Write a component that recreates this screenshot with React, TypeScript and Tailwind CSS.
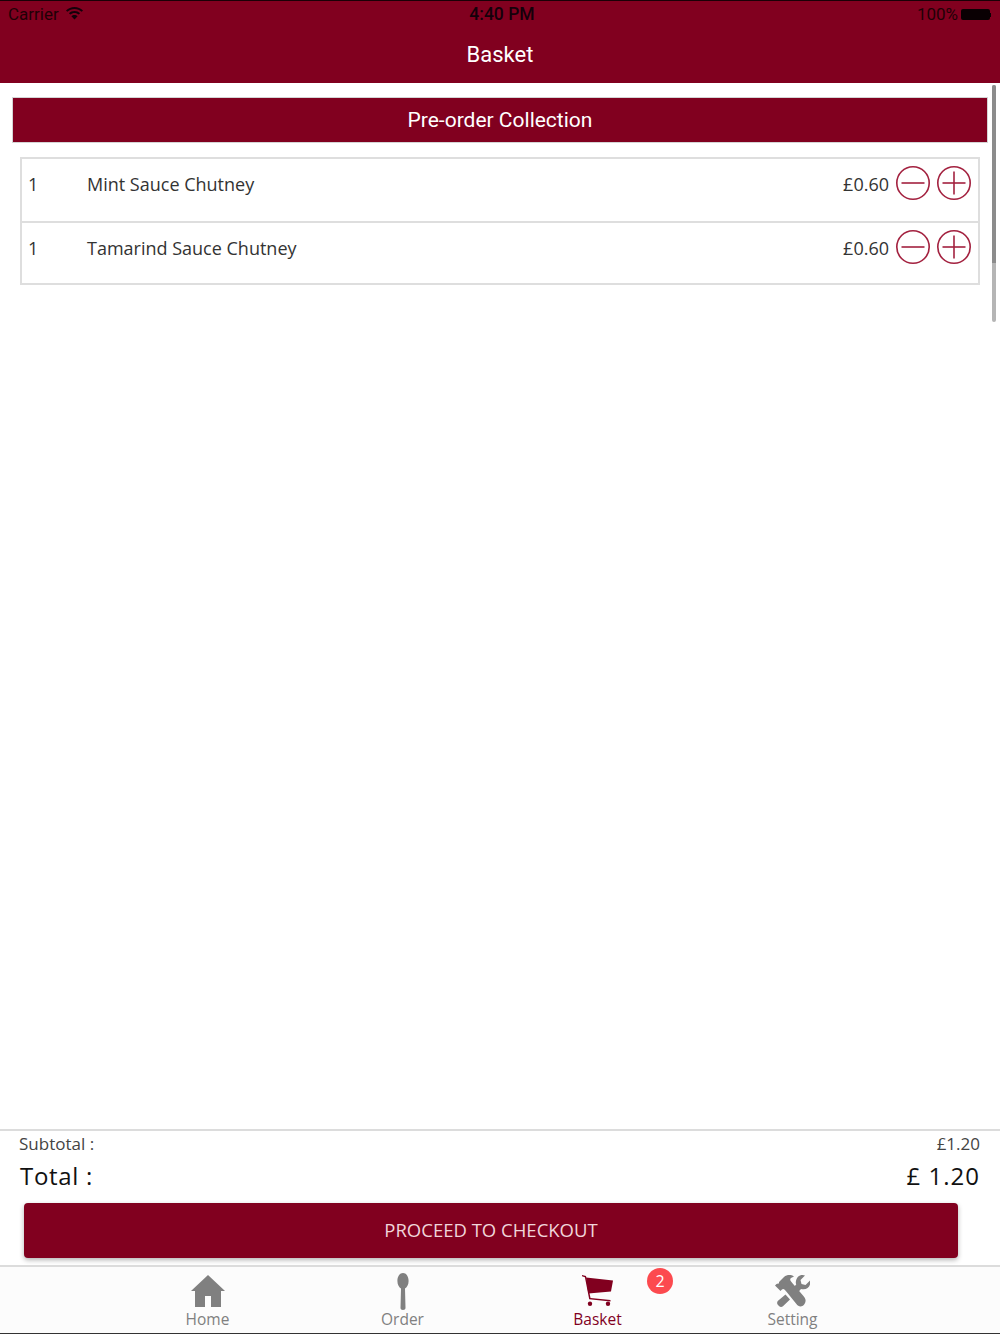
const MAROON = "bg-[#81001f]";

const basketItems = [
    { qty: 1, name: "Mint Sauce Chutney", price: "£0.60" },
    { qty: 1, name: "Tamarind Sauce Chutney", price: "£0.60" },
];

const RoundButton = (props: { plus?: boolean }) => {
    return (
        <svg width="36" height="36" viewBox="0 0 36 36" fill="none" stroke="#a3213f" strokeWidth="1.6">
            <circle cx="18" cy="18" r="16.2" />
            <path d="M6.500 18h23" />
            {props.plus && <path d="M18 6.500v23" />}
        </svg>
    );
};

const StatusBar = () => {
    return (
        <div className="flex h-[27px] items-center justify-between pl-2 pr-[9px] font-['Roboto',sans-serif] text-[17px] text-[#1f0006]">
            <div className="flex w-[200px] items-center gap-[7px]">
                <span>Carrier</span>
                <svg width="17" height="13" viewBox="0 0 17 13" fill="#14000a" className="mb-[3px]">
                    <path d="M8.500 0C5.200 0 2.300 1.300 0 3.400l1.300 1.400C3.200 3 5.700 1.900 8.500 1.900s5.300 1.100 7.200 2.900L17 3.400C14.700 1.300 11.800 0 8.500 0z" />
                    <path d="M8.500 4C6.300 4 4.400 4.800 2.900 6.200l1.400 1.400C5.400 6.600 6.900 6 8.500 6s3.100.6 4.200 1.600l1.400-1.400C12.600 4.800 10.700 4 8.500 4z" />
                    <path d="M8.500 8C7.300 8 6.200 8.500 5.400 9.200L8.500 12.500l3.100-3.300C10.800 8.500 9.700 8 8.500 8z" />
                </svg>
            </div>
            <span className="ml-[5px] text-[17.500px] font-medium text-[#14000a]">4:40 PM</span>
            <div className="flex w-[200px] items-center justify-end gap-[3px]">
                <span>100%</span>
                <div className="flex items-center">
                    <div className="h-[11px] w-[29px] rounded-[2px] bg-[#0a0003]" />
                    <div className="h-1 w-[1px] bg-[#0a0003]" />
                </div>
            </div>
        </div>
    );
};

const HomeIcon = () => (
    <svg width="34" height="32" viewBox="0 0 34 32" fill="#808080">
        <path d="M17 0L34 16h-4v16H20V21h-6v11H4V16H0z" />
    </svg>
);

const SpoonIcon = () => (
    <svg width="12" height="37" viewBox="0 0 12 37" fill="#808080">
        <path d="M6 0c3.200 0 5.600 3.500 5.600 8 0 3.800-1.800 6.500-3.600 7.600L8.500 35c0 1.300-1 2-2.500 2s-2.500-.7-2.500-2L4 15.600C2.200 14.500.4 11.800.4 8 .4 3.500 2.800 0 6 0z" />
    </svg>
);

const CartIcon = () => (
    <svg width="32" height="32" viewBox="0 0 32 32" fill="#81001f">
        <path d="M4 2.500L31 5.500 29 16.500 6.300 18.500z" />
        <path d="M0 0l4 1 4.500 22 20 2v1.400L7.200 24.300 2.900 2.200 0 1.300z" />
        <circle cx="8" cy="28.700" r="2.200" />
        <circle cx="26" cy="28.700" r="2.200" />
    </svg>
);

const ToolsIcon = () => (
    <svg width="35" height="32" viewBox="0 0 35 32" fill="#808080">
        <path d="M4 7l5-5c3-2.500 7-2.500 10-.5l-3 1.500c-1 .8-1 2-.3 3l1.800 2.300L28 20.500c1.500 1.700 2.600 3.400 2.600 5 0 3-2.600 6-5 6-1.800 0-3-1-4.400-2.700L11.700 17l-2-2.300c-1-.8-2-.8-3 0L5.500 16 0 10.500l1.500-1.500c.8-.7 1.700-.7 2.500-.5z" />
        <path d="M27.500 0c1 0 1.800.2 2.500.5l-4.500 4.500 1 4 4 1L35 5.500c.3 1 .4 1.800.2 3-.4 3.500-3.500 6-7 5.800-.8 0-1.500-.2-2.200-.4L21.500 19l-4.500-5 4.200-4.500c-.4-1-.5-2-.3-3C21.300 2.700 24 0 27.500 0z" />
        <path d="M10.500 19.500l4.500 5-6.800 6.500c-1.300 1.200-3 1.200-4.200 0l-1-1c-1.200-1.200-1.200-3 0-4.200z" />
    </svg>
);

const Tab = (props: { label: string; active?: boolean; children: React.ReactNode }) => {
    return (
        <div className={`flex flex-col items-center ${props.active ? "text-[#81001f]" : "text-[#808080]"}`}>
            <div className="flex h-[38px] items-center justify-center">{props.children}</div>
            <div className="mt-[-1px] text-[15.500px] leading-[20px]">{props.label}</div>
        </div>
    );
};

export default function App() {
    return (
        <div className="relative flex h-[1334px] flex-col overflow-hidden bg-white font-['Open_Sans',sans-serif]">
            <div className={`h-[83px] border-t border-[#1a0006] ${MAROON}`}>
                <StatusBar />
                <div className="mt-[11px] text-center font-['Roboto',sans-serif] text-[22px] leading-[32px] text-white">Basket</div>
            </div>

            <div className="min-h-0 flex-1 px-3 pt-[14px]">
                <div className={`h-[46px] border border-[#d4d4d4] text-center font-['Roboto',sans-serif] text-[21px] leading-[45px] text-white ${MAROON}`}>
                    Pre-order Collection
                </div>
                <div className="mx-2 mt-[14px] border-2 border-[#dedede]">
                    {basketItems.map((item, i) => (
                        <div key={item.name} className={`flex h-[62px] items-start pl-[6px] pr-[6px] pt-[6px] text-[#333333] ${i > 0 ? "border-t-2 border-[#dedede]" : ""}`}>
                            <div className="w-[59px] text-[18px] leading-[38px]">{item.qty}</div>
                            <div className="flex-1 text-[18px] leading-[38px]">{item.name}</div>
                            <div className="mr-[6px] text-[18px] leading-[38px]">{item.price}</div>
                            <div className="flex gap-[5px]">
                                <RoundButton />
                                <RoundButton plus />
                            </div>
                        </div>
                    ))}
                </div>
            </div>

            <div className="h-[136px] border-t-2 border-[#dcdcdc]">
                <div className="flex justify-between pl-[19px] pr-5 pt-[1px] text-[17px] leading-[24px] text-[#444444]">
                    <span>Subtotal :</span>
                    <span>£1.20</span>
                </div>
                <div className="mt-[1px] flex justify-between pl-5 pr-5 text-[24px] leading-[38px] text-[#111111]">
                    <span className="tracking-[0.7px]">Total :</span>
                    <span className="tracking-[1px]">£ 1.20</span>
                </div>
                <div className={`ml-6 mt-[8px] h-[55px] w-[934px] rounded-[4px] text-center text-[18.500px] leading-[53px] text-[#f0d5da] shadow-[0_2px_5px_rgba(0,0,0,0.3)] ${MAROON}`}>
                    PROCEED TO CHECKOUT
                </div>
            </div>

            <div className="grid h-[69px] grid-cols-4 border-t-2 border-b border-t-[#dcdcdc] border-b-[#333333] bg-[#fcfcfc] px-[110px] pt-[5px]">
                <Tab label="Home"><HomeIcon /></Tab>
                <Tab label="Order"><SpoonIcon /></Tab>
                <Tab label="Basket" active><CartIcon /></Tab>
                <Tab label="Setting"><ToolsIcon /></Tab>
            </div>

            {/* cart badge */}
            <div className="absolute left-[647px] top-[1268px] flex h-[26px] w-[26px] items-center justify-center rounded-full bg-[#fc4a4f] text-[16px] text-white">2</div>
            {/* scroll indicator, paler over its lower part */}
            <div className="absolute left-[992px] top-[85px] h-[237px] w-[4px] overflow-hidden rounded-full bg-[#b5b5b5]">
                <div className="h-[178px] bg-[#8c8c8c]" />
            </div>
        </div>
    );
}
